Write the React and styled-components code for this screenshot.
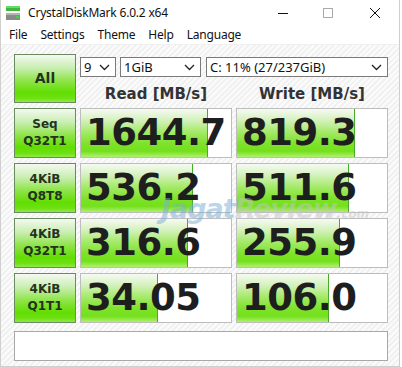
import styled, { createGlobalStyle } from 'styled-components';

const GlobalStyle = createGlobalStyle`
  html, body { margin: 0; padding: 0; background: #ffffff; }
  body { font-family: "Noto Sans", "DejaVu Sans", sans-serif; }
`;

const results = [
  { line1: 'Seq', line2: 'Q32T1', read: '1644.7', readFill: 126, write: '819.3', writeFill: 117 },
  { line1: '4KiB', line2: 'Q8T8', read: '536.2', readFill: 111, write: '511.6', writeFill: 111 },
  { line1: '4KiB', line2: 'Q32T1', read: '316.6', readFill: 106, write: '255.9', writeFill: 102 },
  { line1: '4KiB', line2: 'Q1T1', read: '34.05', readFill: 76, write: '106.0', writeFill: 91 },
];

const App = () => {
  return (
    <>
      <GlobalStyle />
      <Window>
        <TitleBar>
          <AppIcon />
          <Title>CrystalDiskMark 6.0.2 x64</Title>
          <Controls>
            <CtrlButton>
              <svg width="12" height="12" viewBox="0 0 12 12"><path d="M1 6.5h10" stroke="#111" strokeWidth="1" /></svg>
            </CtrlButton>
            <CtrlButton>
              <svg width="12" height="12" viewBox="0 0 12 12"><rect x="1.5" y="1.5" width="9" height="9" fill="none" stroke="#aaa" /></svg>
            </CtrlButton>
            <CtrlButton>
              <svg width="12" height="12" viewBox="0 0 12 12"><path d="M1 1l10 10M11 1L1 11" stroke="#111" strokeWidth="1" /></svg>
            </CtrlButton>
          </Controls>
        </TitleBar>
        <MenuBar>
          <MenuItem>File</MenuItem>
          <MenuItem>Settings</MenuItem>
          <MenuItem>Theme</MenuItem>
          <MenuItem>Help</MenuItem>
          <MenuItem>Language</MenuItem>
        </MenuBar>
        <Client>
          <Grid>
            <LabelButton $big>All</LabelButton>
            <TopArea>
              <SelectRow>
                <Select $w={36}>9<Chevron /></Select>
                <Select $w={81}>1GiB<Chevron /></Select>
                <Select $w={182}>C: 11% (27/237GiB)<Chevron /></Select>
              </SelectRow>
              <Headers>
                <Header>Read [MB/s]</Header>
                <Header>Write [MB/s]</Header>
              </Headers>
            </TopArea>
            {results.map((r, i) => (
              <Row key={i}>
                <LabelButton>{r.line1}<br />{r.line2}</LabelButton>
                <Cell>
                  <Fill style={{ width: r.readFill }} />
                  <Value>{r.read}</Value>
                </Cell>
                <Cell>
                  <Fill style={{ width: r.writeFill }} />
                  <Value>{r.write}</Value>
                </Cell>
              </Row>
            ))}
          </Grid>
          <Comment />
          <Watermark>
            <Jagat>Jagat</Jagat><Review>Review</Review><Dotcom>.com</Dotcom>
          </Watermark>
        </Client>
      </Window>
    </>
  );
};

const AppIcon = () => (
  <svg width="16" height="16" viewBox="0 0 16 16">
    <rect x="1" y="1" width="14" height="5" fill="#3cb83c" />
    <rect x="1" y="1" width="14" height="2" fill="#6ed86e" />
    <rect x="1" y="8" width="14" height="7" fill="#8a8a8a" />
    <rect x="1" y="8" width="14" height="2" fill="#b4b4b4" />
    <rect x="11" y="11" width="3" height="2" fill="#3cdc3c" />
  </svg>
);

const Chevron = () => (
  <ChevronSvg width="11" height="7" viewBox="0 0 11 7">
    <path d="M1 1l4.5 4.5L10 1" fill="none" stroke="#222" strokeWidth="1.3" />
  </ChevronSvg>
);

const Window = styled.div`
  width: 398px;
  height: 366px;
  border: 1px solid #cfcfcf;
  border-top: none;
  display: flex;
  flex-direction: column;
  background: #ffffff;
`;

const TitleBar = styled.div`
  height: 25px;
  display: flex;
  align-items: center;
  padding-left: 4px;
`;

const Title = styled.div`
  margin-left: 7px;
  font-size: 12px;
  color: #111;
  font-family: "Noto Sans", sans-serif;
  letter-spacing: -0.2px;
`;

const Controls = styled.div`
  margin-left: auto;
  display: flex;
`;

const CtrlButton = styled.div`
  width: 45px;
  height: 25px;
  display: flex;
  align-items: center;
  justify-content: center;
  &:last-child { width: 48px; margin-left: 1px; }
`;

const MenuBar = styled.div`
  height: 19px;
  display: flex;
  align-items: center;
  padding-left: 8px;
  gap: 13px;
  border-bottom: 1px solid #f0f0f0;
`;

const MenuItem = styled.span`
  font-size: 12px;
  color: #111;
  letter-spacing: -0.2px;
`;

const Client = styled.div`
  position: relative;
  flex: 1;
  padding: 9px 0 0 13px;
  background: repeating-linear-gradient(
    -45deg,
    #f1f1f1 0px,
    #f1f1f1 2px,
    #fbfbfb 2px,
    #fbfbfb 4px
  );
`;

const Grid = styled.div`
  display: flex;
  flex-direction: column;
  gap: 5px;
`;

const Row = styled.div`
  display: grid;
  grid-template-columns: 62px 152px 152px;
  column-gap: 4px;
  height: 50px;
`;

const TopArea = styled.div`
  position: absolute;
  left: 79px;
  top: 12px;
  width: 308px;
`;

const SelectRow = styled.div`
  display: flex;
  gap: 4px;
  & > :nth-child(3) { margin-left: 1px; }
`;

const Select = styled.div`
  width: ${p => p.$w}px;
  height: 20px;
  box-sizing: border-box;
  border: 1px solid #7a7a7a;
  background: #fff;
  display: flex;
  align-items: center;
  padding-left: 3px;
  font-size: 13px;
  color: #111;
  position: relative;
`;

const ChevronSvg = styled.svg`
  position: absolute;
  right: 5px;
  top: 6px;
`;

const Headers = styled.div`
  display: grid;
  grid-template-columns: 152px 152px;
  column-gap: 4px;
  margin-top: 8px;
`;

const Header = styled.div`
  text-align: center;
  font-family: "DejaVu Sans", sans-serif;
  font-weight: bold;
  font-size: 15px;
  color: #333;
`;

const LabelButton = styled.div`
  box-sizing: border-box;
  width: 62px;
  height: ${p => (p.$big ? '49px' : '50px')};
  border: 1px solid #6b8a62;
  background: linear-gradient(
    to bottom,
    #f4f9f1 0%,
    #c8eeb0 28%,
    #8ee448 55%,
    #62de02 80%,
    #6ee012 92%,
    #90e84a 100%
  );
  display: flex;
  align-items: center;
  justify-content: center;
  text-align: center;
  font-family: "DejaVu Sans", sans-serif;
  font-weight: bold;
  font-size: ${p => (p.$big ? '14px' : '12px')};
  line-height: 17px;
  color: #24321f;
`;

const Cell = styled.div`
  position: relative;
  box-sizing: border-box;
  border: 1px solid #bdbdbd;
  background: #fff;
  overflow: hidden;
`;

const Fill = styled.div`
  position: absolute;
  left: 0;
  top: 0;
  bottom: 0;
  border-right: 1px solid #4aa82a;
  background: linear-gradient(
    to bottom,
    #f6faf3 0%,
    #d6f2c0 22%,
    #a4ea68 48%,
    #7ee22a 72%,
    #74e01c 88%,
    #b0f070 100%
  );
`;

const Value = styled.div`
  position: relative;
  padding-left: 5px;
  font-family: "DejaVu Sans", sans-serif;
  font-weight: bold;
  font-size: 37px;
  line-height: 48px;
  color: #1e1e1e;
  letter-spacing: -0.5px;
`;

const Comment = styled.div`
  margin-top: 8px;
  width: 374px;
  height: 30px;
  box-sizing: border-box;
  border: 1px solid #a8a8a8;
  background: #fff;
`;

const Watermark = styled.div`
  position: absolute;
  left: 160px;
  top: 148px;
  font-family: "DejaVu Sans", sans-serif;
  font-weight: bold;
  font-style: italic;
  font-size: 27px;
  letter-spacing: -1px;
  pointer-events: none;
  opacity: 0.5;
`;

const Jagat = styled.span`
  color: #7aaed6;
`;

const Review = styled.span`
  color: #c4c4c4;
`;

const Dotcom = styled.span`
  font-size: 12px;
  color: #c4c4c4;
  letter-spacing: 0;
`;

export default App;
